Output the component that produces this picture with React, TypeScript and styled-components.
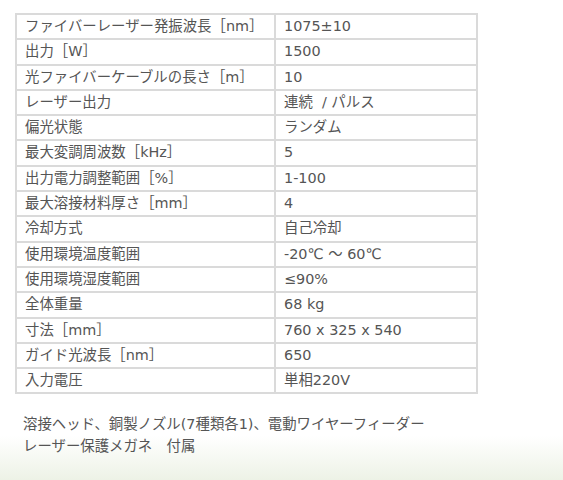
import React from 'react';
import styled, { createGlobalStyle } from 'styled-components';

const GlobalStyle = createGlobalStyle`
  html, body {
    margin: 0;
    padding: 0;
    background: #fff;
  }
  body {
    font-family: "DejaVu Sans", "Noto Sans CJK JP", sans-serif;
    color: #555;
  }
`;

const Page = styled.div`
  width: 563px;
  height: 480px;
  box-sizing: border-box;
  padding: 13px 0 0 15px;
  background: linear-gradient(to bottom, #fff 0px, #fff 436px, #edf2e6 480px);
  overflow: hidden;
`;

const SpecTable = styled.table`
  width: 463px;
  border-collapse: collapse;
  font-size: 14.4px;
  line-height: 23.3px;
  color: #555;
`;

const Cell = styled.td<{ $label?: boolean }>`
  border: 2px solid #dadada;
  padding: 0 8px;
  width: ${p => (p.$label ? '241px' : 'auto')};
  white-space: pre;
`;

const Note = styled.p`
  margin: 19px 0 0 8px;
  font-size: 14.4px;
  line-height: 22px;
  color: #555;
`;

const specs: [string, string][] = [
  ['ファイバーレーザー発振波長［nm］', '1075±10'],
  ['出力［W］', '1500'],
  ['光ファイバーケーブルの長さ［m］', '10'],
  ['レーザー出力', '連続  / パルス'],
  ['偏光状態', 'ランダム'],
  ['最大変調周波数［kHz］', '5'],
  ['出力電力調整範囲［%］', '1-100'],
  ['最大溶接材料厚さ［mm］', '4'],
  ['冷却方式', '自己冷却'],
  ['使用環境温度範囲', '-20℃ ～ 60℃'],
  ['使用環境湿度範囲', '≤90%'],
  ['全体重量', '68 kg'],
  ['寸法［mm］', '760 x 325 x 540'],
  ['ガイド光波長［nm］', '650'],
  ['入力電圧', '単相220V'],
];

export default function App() {
  return (
    <Page>
      <GlobalStyle />
      <SpecTable>
        <tbody>
          {specs.map(([label, value]) => (
            <tr key={label}>
              <Cell $label>{label}</Cell>
              <Cell>{value}</Cell>
            </tr>
          ))}
        </tbody>
      </SpecTable>
      <Note>
        溶接ヘッド、銅製ノズル(7種類各1)、電動ワイヤーフィーダー
        <br />
        レーザー保護メガネ　付属
      </Note>
    </Page>
  );
}
